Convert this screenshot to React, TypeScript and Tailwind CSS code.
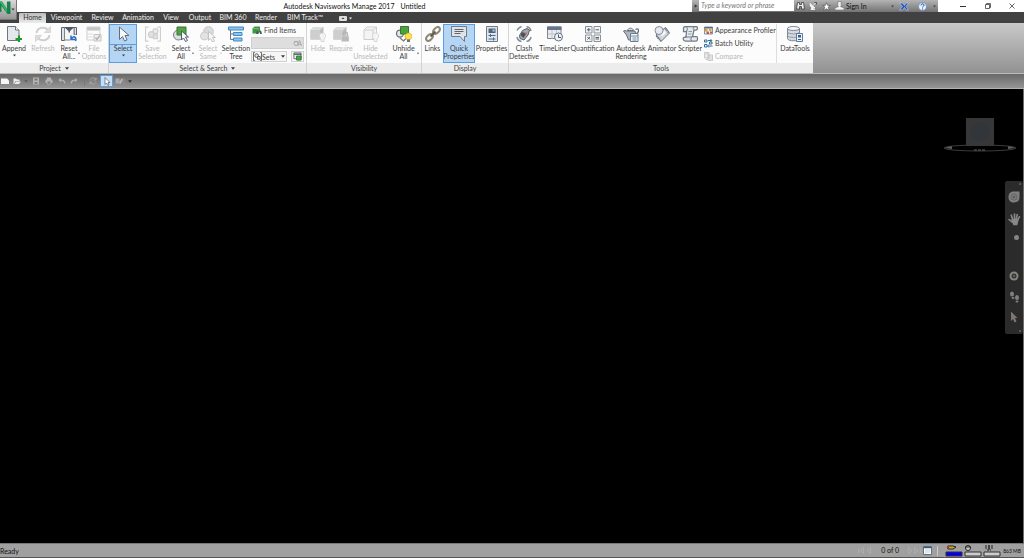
import type { ReactNode } from "react";

// 32x32 grid drawings used by the large ribbon buttons
const ribbonIcons: Record<string, ReactNode> = {
  append: (
    <>
      <path d="M3 1h16l7 7v21H3z" fill="#e4e7eb" stroke="#70757d" strokeWidth="2" />
      <path d="M19 1v7h7" fill="#fff" stroke="#70757d" strokeWidth="2" />
      <path d="M26 19v13M19 26h13" stroke="#1f9a2c" strokeWidth="4" />
    </>
  ),
  refresh: (
    <g fill="none" stroke="#cfcfcf" strokeWidth="4">
      <path d="M3 14C5 2 20 0 27 9M29 18C27 30 12 32 5 23" />
      <path d="M31 1v12H19zM1 31V19h12z" fill="#dedede" strokeWidth="1.5" />
    </g>
  ),
  reset: (
    <>
      <path d="M1 3h6v26H1zM26 3h5v15h-5z" fill="#dfe3e8" stroke="#5c6470" strokeWidth="2" />
      <path d="M7 3h19v25H7z" fill="#f4f5f7" stroke="#7b828c" strokeWidth="2" />
      <path d="M6 2h21l-9 8v3h-3v-3z" fill="#4f5865" />
      <path d="M18 18h14v14H18z" fill="#fafafa" />
      <path d="M20 19v8h8M21 26c3-7 11-5 8 4" fill="none" stroke="#2a6cc4" strokeWidth="3" />
    </>
  ),
  file: (
    <>
      <path d="M2 2h26v6H2z" fill="#c6c6c6" />
      <path d="M2 2h26v26H2z" fill="none" stroke="#cfcfcf" strokeWidth="2" />
      <path d="M2 9h26M2 16h12M2 22h11" stroke="#ddd" strokeWidth="2" />
      <path d="M16 17h14v13H16z" fill="#eee" stroke="#c4c4c4" strokeWidth="2" />
      <path d="M19 23l3 4 6-8" fill="none" stroke="#b5b5b5" strokeWidth="3" />
    </>
  ),
  select: <path d="M9 2v25l6-6 4 9 5-2-4-9h8z" fill="#f3f6fa" stroke="#646d7b" strokeWidth="2" />,
  save: (
    <g fill="none" stroke="#cfcfcf" strokeWidth="2.5">
      <path d="M7 2H1v28h6M25 2h6v28h-6" />
      <circle cx="13" cy="17" r="6" fill="#e2e2e2" />
      <circle cx="21" cy="10" r="5" fill="#ececec" />
      <path d="M17 16h8v9h-8z" fill="#e0e0e0" />
    </g>
  ),
  selectAll: (
    <>
      <circle cx="11" cy="18" r="10" fill="#dcdfe3" stroke="#747c86" strokeWidth="2" />
      <path d="M8 2h18v16H8z" fill="#54a344" stroke="#39782f" strokeWidth="2" />
      <path d="M17 10v18l4-4 4 7 4-2-4-7h6z" fill="#f8fafc" stroke="#555e6b" strokeWidth="2" />
    </>
  ),
  selectSame: (
    <>
      <circle cx="17" cy="11" r="10" fill="#dadada" stroke="#ccc" strokeWidth="2" />
      <circle cx="9" cy="20" r="8" fill="#e2e2e2" stroke="#ccc" strokeWidth="2" />
      <path d="M17 11v18l4-4 4 7 4-2-4-7h6z" fill="#f7f7f7" stroke="#c3c3c3" strokeWidth="2" />
    </>
  ),
  tree: (
    <>
      <path d="M5 7v20h7M5 16h7" fill="none" stroke="#6b7580" strokeWidth="2" />
      <g fill="#8fc3ea" stroke="#3f8cc6" strokeWidth="2">
        <path d="M1 2h30v6H1zM11 13h17v6H11zM11 24h17v6H11z" />
      </g>
    </>
  ),
  hide: (
    <>
      <path d="M1 8l6-6h20v18l-6 7H1z" fill="#bdbdbd" />
      <path d="M1 8h19v19H1z" fill="#cecece" />
      <path d="M1 8l6-6h20l-7 6z" fill="#dedede" />
      <path d="M22 26c-6-5-3-12 3-12s9 7 3 12v5h-6z" fill="#f3f3f3" stroke="#cecece" strokeWidth="1.5" />
    </>
  ),
  require: (
    <>
      <path d="M1 8l6-6h20v18l-6 7H1z" fill="#bdbdbd" />
      <path d="M1 8h19v19H1z" fill="#cecece" />
      <path d="M1 8l6-6h20l-7 6z" fill="#dedede" />
      <path d="M20 20v-4c0-5 9-5 9 0v4" fill="none" stroke="#b3b3b3" strokeWidth="2.5" />
      <path d="M17 20h15v11H17z" fill="#bababa" stroke="#ddd" />
    </>
  ),
  unselected: (
    <>
      <path d="M2 8l6-6h19v18l-6 7H2zM2 8h18v19M20 8l7-6" fill="#f4f4f4" stroke="#cdcdcd" strokeWidth="2" />
      <path d="M22 26c-6-5-3-12 3-12s9 7 3 12v5h-6z" fill="#f5f5f5" stroke="#cecece" strokeWidth="1.5" />
    </>
  ),
  unhide: (
    <>
      <circle cx="8" cy="15" r="7" fill="#e4e7eb" stroke="#68717d" strokeWidth="2.5" />
      <path d="M9 1h16v15H9z" fill="#4fa043" stroke="#39782f" strokeWidth="2" />
      <path d="M8 24l7 6 5-5" fill="none" stroke="#777" strokeWidth="2.5" />
      <path d="M22 27c-7-5-3-13 3-13s10 8 3 13z" fill="#ffe14a" stroke="#d7a715" strokeWidth="1.5" />
      <path d="M22 27h6v5h-6z" fill="#68717d" />
    </>
  ),
  links: (
    <g fill="none" strokeWidth="4">
      <ellipse cx="23" cy="9" rx="8" ry="5" transform="rotate(-45 23 9)" stroke="#8f8775" />
      <ellipse cx="9" cy="23" rx="8" ry="5" transform="rotate(-45 9 23)" stroke="#8f8775" />
      <path d="M11 21l10-10" stroke="#635c4d" />
    </g>
  ),
  quick: (
    <>
      <path d="M1 1h30v20h-4v10l-9-10H1z" fill="#dfe2e6" stroke="#717a87" strokeWidth="2" />
      <path d="M7 7h18M7 11h18M7 15h12" stroke="#5b6572" strokeWidth="2" />
    </>
  ),
  properties: (
    <>
      <path d="M5 1h22v30H5z" fill="#e1e5ea" stroke="#717a87" strokeWidth="2" />
      <path d="M9 5h14v9H9z" fill="#4c647d" />
      <path d="M17 7h4v4h-4z" fill="#c0cddb" />
      <path d="M9 19h14M9 26h14M13 16v6M19 23v6" stroke="#416d98" strokeWidth="2" />
    </>
  ),
  clash: (
    <>
      <path d="M2 9C4 4 6 3 11 1M21 1c5 1 8 4 9 9M2 22c1 5 4 8 9 9M21 31c5-1 8-4 9-9" fill="none" stroke="#858b94" strokeWidth="3" />
      <path d="M7 19l6-10 9-4 5 3-3 10-8 10-8-3z" fill="#a3aab2" stroke="#545c66" strokeWidth="2" />
      <path d="M12 12l9 3-6 9-6-5z" fill="#4c525b" />
      <path d="M17 14l5-2-2 6z" fill="#c36b5b" />
    </>
  ),
  timeliner: (
    <>
      <path d="M1 2h27v23H1z" fill="#e9ebee" stroke="#7d8591" strokeWidth="2" />
      <path d="M0 1h29v7H0z" fill="#66758a" />
      <path d="M2 16h26M10 8v17M19 8v17" stroke="#bfc5cc" strokeWidth="2" />
      <circle cx="23" cy="22" r="8" fill="#eef2f6" stroke="#69737f" strokeWidth="2" />
      <path d="M23 17v6h5" fill="none" stroke="#4b5663" strokeWidth="2" />
    </>
  ),
  quantification: (
    <>
      <g fill="#f1f2f4" stroke="#8b9199" strokeWidth="2">
        <path d="M1 1h13v13H1zM18 1h13v13H18zM1 18h13v13H1zM18 18h13v13H18z" />
      </g>
      <path d="M4 7.5h7M7.5 4v7M21 7.5h7M5 22l5 5M10 22l-5 5M21 23h7M21 26h7" stroke="#59616b" strokeWidth="2" />
    </>
  ),
  rendering: (
    <>
      <path d="M7 10h17l2 8-6 10h-9L7 18 1 10l3-1z" fill="#b3b8bf" stroke="#666e79" strokeWidth="2" />
      <path d="M9 9c1-6 11-6 12 0z" fill="#e1e4e7" stroke="#666e79" strokeWidth="2" />
      <path d="M25 7c8-4 8 5 1 9" fill="none" stroke="#666e79" strokeWidth="2.5" />
      <path d="M15 15h15v16H15z" fill="#f3f5f7" stroke="#6e7a88" strokeWidth="2" />
      <path d="M15 20h15M19 24h8M19 28h8" stroke="#6e91b5" strokeWidth="2" />
    </>
  ),
  animator: (
    <>
      <path d="M4 18L23 3l8 11-17 17z" fill="#d1d6dc" stroke="#69727f" strokeWidth="2" />
      <path d="M5 20l9 10M23 5l7 9" stroke="#69727f" strokeWidth="4" strokeDasharray="2 2" />
      <path d="M13 16l8-7 3 5-8 7z" fill="#f8fafc" />
      <circle cx="10" cy="9" r="8" fill="#e6e9ed" stroke="#858d98" strokeWidth="2" />
    </>
  ),
  scripter: (
    <>
      <path d="M9 11H3V4c0-3 3-3 5-3h20c4 0 4 7 0 7h-4l-3 13h8c3 0 3 9-1 9H6c-5-1-5-8 0-8h2z" fill="#e6e9ed" stroke="#737b86" strokeWidth="2.5" />
      <path d="M8 1c4 2 3 6 1 10M24 8c-3-2-2-6 3-7M6 22h14c-3 2-3 6 0 8" fill="none" stroke="#737b86" strokeWidth="2" />
      <path d="M13 11h7M12 16h7" stroke="#929aa4" strokeWidth="2" />
    </>
  ),
  data: (
    <>
      <path d="M1 5v20c0 6 24 6 24 0V5" fill="#d5dae0" stroke="#7b8590" strokeWidth="2" />
      <ellipse cx="13" cy="5" rx="12" ry="4" fill="#f3f5f7" stroke="#7b8590" strokeWidth="2" />
      <path d="M1 12c0 5 24 5 24 0M1 19c0 5 24 5 24 0" fill="none" stroke="#8e98a3" strokeWidth="2" />
      <path d="M19 15h12v16H19z" fill="#edf2f7" stroke="#597b9e" strokeWidth="2" />
      <path d="M22 18h6v5h-6zM22 26h6v2h-6z" fill="#355f8a" />
    </>
  ),
};

interface RibbonButtonProps {
  icon: string;
  lines: string[];
  width: string;
  disabled?: boolean;
  active?: boolean;
  menu?: "below" | "side";
}

function Caret({ className = "w-[4px]" }: { className?: string }) {
  return (
    <svg viewBox="0 0 6 4" className={`h-[3px] shrink-0 fill-current ${className}`}>
      <path d="M0 0h6L3 4z" />
    </svg>
  );
}

function RibbonButton({ icon, lines, width, disabled, active, menu }: RibbonButtonProps) {
  return (
    <button
      type="button"
      disabled={disabled}
      className={`relative flex h-[39px] shrink-0 flex-col items-center whitespace-nowrap pt-[2px] leading-[8px] ${width} ${
        active ? "bg-[#b5d5f4] outline outline-1 -outline-offset-1 outline-[#5a9de0]" : ""
      } ${disabled ? "text-[#b8b8b8]" : "text-[#3c3c3c]"}`}
    >
      <svg viewBox="0 0 32 32" className="mb-[2px] size-[16px] shrink-0">
        {ribbonIcons[icon]}
      </svg>
      {lines.map((line) => (
        <span key={line}>{line}</span>
      ))}
      {menu === "below" && <Caret className="mt-[2px] w-[3px]" />}
      {menu === "side" && <Caret className="absolute right-0 bottom-[8px] w-[2px]" />}
      {active && menu && <span className="absolute inset-x-0 top-[20px] h-px bg-[#5a9de0]" />}
    </button>
  );
}

function Panel({ title, menu, last, children }: { title: string; menu?: boolean; last?: boolean; children: ReactNode }) {
  return (
    <section className={`flex shrink-0 flex-col bg-[#fcfcfc] ${last ? "" : "border-r border-[#d4d4d4]"}`}>
      <div className="flex h-[40px] pt-px">{children}</div>
      <h2 className="flex h-[10px] items-center justify-center gap-[4px] bg-[#ececec] leading-[10px] text-[#3c3c3c]">
        {title}
        {menu && <Caret />}
      </h2>
    </section>
  );
}

const tabs = [
  { name: "Home", width: "w-[27px]" },
  { name: "Viewpoint", width: "w-[41px]" },
  { name: "Review", width: "w-[31px]" },
  { name: "Animation", width: "w-[40px]" },
  { name: "View", width: "w-[26px]" },
  { name: "Output", width: "w-[32px]" },
  { name: "BIM 360", width: "w-[34px]" },
  { name: "Render", width: "w-[32px]" },
  { name: "BIM Track™", width: "w-[46px]" },
];

function TitleBar() {
  return (
    <header className="flex h-[12px] shrink-0 bg-white text-[#333]">
      <button
        type="button"
        aria-label="Application menu"
        className="relative z-10 flex h-[20px] w-[17px] items-start rounded-br-[2px] border-r border-b border-[#777] bg-linear-to-b from-[#d9d9d9] to-[#969696]"
      >
        <svg viewBox="0 0 32 36" className="h-[18px] w-[16px] shrink-0">
          <path d="M0 3h4l10 15V3h7v25h-6L3 12v12H0z" fill="#178248" />
          <path d="M4 3l10 15v7L0 5V3z" fill="#35b36d" />
          <path d="M23 17h6l-3 4z" fill="#333" />
        </svg>
      </button>
      <h1 className="flex h-[11px] flex-1 items-center justify-center gap-[6px] text-[#111]">
        <span>Autodesk Navisworks Manage 2017</span>
        <span>Untitled</span>
      </h1>
      <div className="flex w-[246px] items-center bg-linear-to-b from-[#b4b4b4] to-[#747474]">
        <svg viewBox="0 0 8 12" className="h-[12px] w-[7px] shrink-0">
          <path d="M3 4l3 2-3 2z" fill="#333" />
        </svg>
        <input
          aria-label="Search"
          placeholder="Type a keyword or phrase"
          className="mb-px h-[11px] w-[95px] bg-white px-[2px] pb-px italic placeholder:text-[#777]"
        />
        <div className="flex flex-1 items-center pl-[2px]">
          <button type="button" aria-label="Find" className="w-[13px]">
            <svg viewBox="0 0 18 16" className="h-[8px] w-[9px]">
              <path d="M3 1h4v4h4V1h4l2 13h-6V9H7v5H1z" fill="#eee" stroke="#333" strokeWidth="1.5" />
            </svg>
          </button>
          <button type="button" aria-label="Subscription" className="w-[13px]">
            <svg viewBox="0 0 16 16" className="size-[8px]">
              <path d="M2 3c0 8 5 10 10 9zM6 11l-2 4h8M8 7l5-5" fill="#fff" stroke="#eee" strokeWidth="2" />
              <path d="M11 1h4v4" fill="none" stroke="#333" strokeWidth="1.5" />
            </svg>
          </button>
          <button type="button" aria-label="Favorites" className="w-[13px]">
            <svg viewBox="0 0 16 16" className="size-[9px]">
              <path d="M8 1l2 5h5l-4 3 2 6-5-3-5 3 2-6-4-3h5z" fill="#fff" stroke="#444" />
            </svg>
          </button>
          <button type="button" className="flex items-center gap-[2px] whitespace-nowrap pb-px text-[#111]">
            <svg viewBox="0 0 16 16" className="size-[9px]">
              <path d="M5 1h6v7l-1 2 6 2v4H0v-4l6-2-1-2z" fill="#f3f3f3" stroke="#666" />
            </svg>
            Sign In
          </button>
          <Caret className="ml-auto w-[3px] text-[#444]" />
          <button type="button" aria-label="Exchange" className="ml-[5px]">
            <svg viewBox="0 0 20 18" className="h-[9px] w-[10px]">
              <path d="M1 2l6 7-6 7h6l4-5 3 5h5l-5-7 5-7h-5l-3 5-4-5z" fill="#2859b5" stroke="#dce7fa" />
            </svg>
          </button>
          <button type="button" aria-label="Help" className="mr-[6px] ml-[9px]">
            <svg viewBox="0 0 18 18" className="size-[9px]">
              <circle cx="9" cy="9" r="8" fill="#eaf1fb" stroke="#3469ae" />
              <path d="M6 7c0-5 7-4 6 0-1 2-3 2-3 4M9 13v2" fill="none" stroke="#174f9f" strokeWidth="2" />
            </svg>
          </button>
          <Caret className="mr-[2px] w-[3px] text-[#444]" />
        </div>
      </div>
      <div className="flex w-[86px] items-center justify-between pr-[9px] pb-px pl-[22px]">
        <button type="button" aria-label="Minimize">
          <svg viewBox="0 0 6 6" className="size-[6px]"><path d="M0 3.5h6" stroke="#333" /></svg>
        </button>
        <button type="button" aria-label="Restore">
          <svg viewBox="0 0 12 12" className="size-[6px]">
            <path d="M1 3h8v8H1zM3 3V1h8v8H9" fill="none" stroke="#333" strokeWidth="1.5" />
          </svg>
        </button>
        <button type="button" aria-label="Close">
          <svg viewBox="0 0 12 12" className="size-[6px]">
            <path d="M1 1l10 10M11 1L1 11" stroke="#333" strokeWidth="1.5" />
          </svg>
        </button>
      </div>
    </header>
  );
}

function TabBar() {
  return (
    <nav className="flex h-[11px] shrink-0 items-end bg-[#414141] pl-[19px] text-[#f0f0f0]">
      {tabs.map((tab, i) => (
        <button
          key={tab.name}
          type="button"
          className={`h-[10px] whitespace-nowrap pb-[2px] text-center leading-[8px] ${tab.width} ${
            i === 0 ? "rounded-t-[1px] bg-linear-to-b from-[#bcbcbc] to-[#ececec] text-[#333]" : ""
          }`}
        >
          {tab.name}
        </button>
      ))}
      <button type="button" aria-label="Ribbon display" className="ml-[11px] flex h-[10px] items-center gap-[2px]">
        <svg viewBox="0 0 16 10" className="h-[5px] w-[8px]">
          <rect width="16" height="10" rx="2" fill="#ddd" />
          <path d="M5 6h6L8 3z" fill="#333" />
        </svg>
        <Caret className="w-[3px]" />
      </button>
    </nav>
  );
}

function Ribbon() {
  return (
    <main className="flex h-[50px] shrink-0 bg-linear-to-b from-[#c9c9c9] to-[#929292]">
      <Panel title="Project" menu>
        <RibbonButton icon="append" lines={["Append"]} width="w-[28px]" menu="below" />
        <RibbonButton icon="refresh" lines={["Refresh"]} width="w-[30px]" disabled />
        <RibbonButton icon="reset" lines={["Reset", "All..."]} width="w-[22px]" menu="side" />
        <RibbonButton icon="file" lines={["File", "Options"]} width="w-[28px]" disabled />
      </Panel>
      <Panel title="Select & Search" menu>
        <RibbonButton icon="select" lines={["Select"]} width="w-[28px]" active menu="below" />
        <RibbonButton icon="save" lines={["Save", "Selection"]} width="w-[31px]" disabled />
        <RibbonButton icon="selectAll" lines={["Select", "All"]} width="w-[26px]" menu="side" />
        <RibbonButton icon="selectSame" lines={["Select", "Same"]} width="w-[28px]" disabled menu="side" />
        <RibbonButton icon="tree" lines={["Selection", "Tree"]} width="w-[28px]" />
        <div className="flex w-[56px] flex-col pr-[2px] pl-px text-[#3c3c3c]">
          <button type="button" className="flex h-[13px] items-center gap-[2px] whitespace-nowrap pb-px pl-px">
            <svg viewBox="0 0 20 18" className="h-[9px] w-[10px] shrink-0">
              <path d="M1 5l4-4h11v10l-4 4H1z" fill="#3f9840" />
              <path d="M1 5h11v10" fill="none" stroke="#83c37a" strokeWidth="1.5" />
              <path d="M8 16l2-7h3v3h2V9h3l2 7h-4v-3h-3v3z" fill="#485767" />
            </svg>
            Find Items
          </button>
          <div className="flex h-[12px] items-center border border-[#d0d0d0] bg-[#dedede] pr-px">
            <input aria-label="Quick find" disabled className="h-[9px] w-[41px]" />
            <svg viewBox="0 0 18 16" className="h-[8px] w-[9px]" fill="none" stroke="#aaa" strokeWidth="2">
              <path d="M2 5h8M13 3l-3 10 3-3 4 3z" />
              <circle cx="6" cy="9" r="4" />
            </svg>
          </div>
          <div className="flex h-[13px] items-end">
            <label className="relative flex h-[11px] w-[36px] items-center border border-[#d0d0d0] bg-[#f6f6f6] pl-px">
              <svg viewBox="0 0 20 20" className="size-[9px] shrink-0" fill="#e1e4e8" stroke="#555" strokeWidth="2">
                <path d="M4 1H1v18h3M16 1h3v18h-3" fill="none" />
                <circle cx="8" cy="8" r="4" />
                <path d="M10 10h6v6h-6z" />
              </svg>
              <select aria-label="Selection sets" className="w-[18px] appearance-none">
                <option>Sets</option>
              </select>
              <Caret className="mr-px ml-auto w-[4px]" />
            </label>
            <button type="button" aria-label="Manage sets" className="ml-auto flex h-[11px] w-[13px] items-center justify-center border border-[#d0d0d0]">
              <svg viewBox="0 0 20 20" className="size-[9px]">
                <path d="M2 2h16v13H2z" fill="#eee" stroke="#56606b" strokeWidth="2" />
                <path d="M2 5h16" stroke="#56606b" strokeWidth="3" />
                <path d="M8 9h10v9H8z" fill="#4ba545" stroke="#297829" strokeWidth="2" />
              </svg>
            </button>
          </div>
        </div>
      </Panel>
      <Panel title="Visibility">
        <RibbonButton icon="hide" lines={["Hide"]} width="w-[22px]" disabled />
        <RibbonButton icon="require" lines={["Require"]} width="w-[24px]" disabled />
        <RibbonButton icon="unselected" lines={["Hide", "Unselected"]} width="w-[35px]" disabled />
        <RibbonButton icon="unhide" lines={["Unhide", "All"]} width="w-[31px]" menu="side" />
        <span className="w-[2px]" />
      </Panel>
      <Panel title="Display">
        <RibbonButton icon="links" lines={["Links"]} width="w-[21px]" />
        <RibbonButton icon="quick" lines={["Quick", "Properties"]} width="w-[32px]" active />
        <RibbonButton icon="properties" lines={["Properties"]} width="w-[33px]" />
      </Panel>
      <Panel title="Tools" last>
        <RibbonButton icon="clash" lines={["Clash", "Detective"]} width="w-[30px]" />
        <RibbonButton icon="timeliner" lines={["TimeLiner"]} width="w-[31px]" />
        <RibbonButton icon="quantification" lines={["Quantification"]} width="w-[45px]" />
        <RibbonButton icon="rendering" lines={["Autodesk", "Rendering"]} width="w-[32px]" />
        <RibbonButton icon="animator" lines={["Animator"]} width="w-[30px]" />
        <RibbonButton icon="scripter" lines={["Scripter"]} width="w-[26px]" />
        <div className="flex w-[74px] flex-col border-r border-[#ddd] pl-px text-[#3c3c3c]">
          <button type="button" className="flex h-[13px] items-center gap-[2px] whitespace-nowrap pb-px">
            <svg viewBox="0 0 18 18" className="size-[9px] shrink-0">
              <path d="M1 2h16v14H1z" fill="#f4f4f4" stroke="#4e77a6" strokeWidth="1.5" />
              <path d="M1 2h16v3H1z" fill="#456e9d" />
              <path d="M2 5h5v6H2zM10 6h5v4h-5z" fill="#e89a2c" />
              <path d="M5 11h5v5H5zM12 11h4v4h-4z" fill="#cc5841" />
            </svg>
            Appearance Profiler
          </button>
          <button type="button" className="flex h-[13px] items-center gap-[2px] whitespace-nowrap pb-px">
            <svg viewBox="0 0 18 18" className="size-[9px] shrink-0" fill="none" stroke="#326c9f" strokeWidth="2">
              <path d="M1 2h5v4H1zM1 11h5v5H1zM11 6h5v4h-5zM8 3h7M8 14h9M13 1l3 2-3 3M10 11l-3 3 3 3" />
            </svg>
            Batch Utility
          </button>
          <button type="button" disabled className="flex h-[13px] items-center gap-[2px] whitespace-nowrap pb-px text-[#b8b8b8]">
            <svg viewBox="0 0 18 18" className="size-[9px] shrink-0" fill="#eee" stroke="#bbb" strokeWidth="1.5">
              <path d="M1 1h9v11H1zM8 6h9v11H8zM3 4h5M11 10h4M11 14h4M3 15h5" />
            </svg>
            Compare
          </button>
        </div>
        <RibbonButton icon="data" lines={["DataTools"]} width="w-[36px]" />
      </Panel>
    </main>
  );
}

const quickActions = [
  { name: "New", width: "w-[10px]", color: "#f7f7f7", path: "M0 3h12l4 4v7H0z" },
  { name: "Open", width: "w-[13px]", color: "#ececec", path: "M1 3h5l2 2h5v3H5l-3 6H1zM6 9h10l-4 5H3z" },
  { name: "Open menu", width: "w-[6px]", color: "#444", path: "M2 6h12l-6 6z" },
  { name: "Save", width: "w-[13px]", color: "#b4b4b4", path: "M2 1h12v14H2zM5 3v4h6V3zM5 10v4h6v-4z" },
  { name: "Print", width: "w-[13px]", color: "#b4b4b4", path: "M4 1h8v4h3v7h-3v3H4v-3H1V5h3zM5 9v5h6V9z" },
  { name: "Undo", width: "w-[13px]", color: "#b0b0b0", path: "M1 6l5-4v3c6 0 9 2 9 8h-3c0-4-2-5-6-5v3z" },
  { name: "Redo", width: "w-[12px]", color: "#b0b0b0", path: "M15 6l-5-4v3c-6 0-9 2-9 8h3c0-4 2-5 6-5v3z" },
];

function QuickAccess() {
  return (
    <div role="toolbar" className="flex h-[16px] shrink-0 items-center border-t border-b border-t-[#bbb] border-b-[#b4b4b4] bg-linear-to-b from-[#696969] to-[#959595]">
      {quickActions.map((action) => (
        <button key={action.name} type="button" aria-label={action.name} className={`flex justify-center ${action.width}`}>
          <svg viewBox="0 0 16 16" className={action.name === "Open menu" ? "size-[4px]" : "size-[8px]"}>
            <path d={action.path} fill={action.color} fillRule="evenodd" />
          </svg>
        </button>
      ))}
      <span className="ml-[4px] h-[9px] w-px bg-[#777]" />
      <button type="button" aria-label="Refresh" className="ml-[4px] w-[11px]">
        <svg viewBox="0 0 16 16" className="size-[8px]" fill="none" stroke="#a8a8a8" strokeWidth="2">
          <path d="M2 7c1-7 9-6 11-3M14 1v5H9M14 9c-1 7-9 6-11 3M2 15v-5h5" />
        </svg>
      </button>
      <button type="button" aria-label="Select" className="flex h-[12px] w-[13px] items-center justify-center border border-[#5a9de0] bg-[#c5dff7]">
        <svg viewBox="0 0 16 18" className="h-[9px] w-[8px]">
          <path d="M4 1v14l3-3 3 5 2-1-2-5h4z" fill="#fff" stroke="#59606b" strokeWidth="1.5" />
        </svg>
      </button>
      <button type="button" aria-label="Selection options" className="ml-[2px] w-[13px]">
        <svg viewBox="0 0 20 16" className="h-[8px] w-[10px]">
          <path d="M1 3h8v10H1z" fill="#aaa" />
          <path d="M8 12l5-9 3 2-5 9zM18 2v12" fill="#bbb" stroke="#a4a4a4" />
        </svg>
      </button>
      <button type="button" aria-label="Customize toolbar">
        <Caret className="w-[4px] text-[#333]" />
      </button>
    </div>
  );
}

function NavigationBar() {
  return (
    <aside className="absolute top-[92px] right-0 flex h-[153px] w-[18px] flex-col items-center rounded-[2px] bg-[#2b2b2b]">
      <span className="mt-[2px] mr-[2px] size-[2px] self-end rounded-full bg-[#666]" />
      <button type="button" aria-label="Steering wheel" className="mt-[6px]">
        <svg viewBox="0 0 24 24" className="size-[12px]">
          <path d="M1 12C1 5 5 1 12 1h11v11c0 7-4 11-11 11S1 19 1 12z" fill="#808080" />
          <circle cx="12" cy="12" r="7" fill="#666" />
          <circle cx="12" cy="12" r="4" fill="#5a5a5a" stroke="#858585" strokeWidth="2" />
        </svg>
      </button>
      <button type="button" aria-label="Pan" className="mt-[10px]">
        <svg viewBox="0 0 24 24" className="size-[13px]" fill="none" stroke="#888" strokeLinecap="round" strokeWidth="3">
          <path d="M9 13L6 4M12 12V2M15 12l2-9M17 14l4-7M8 17l-6-5" />
          <path d="M8 13h10l-2 8h-5z" fill="#888" />
        </svg>
      </button>
      <button type="button" aria-label="Zoom" className="mt-[9px] ml-[4px]">
        <svg viewBox="0 0 10 10" className="size-[5px]"><circle cx="5" cy="5" r="5" fill="#858585" /></svg>
      </button>
      <button type="button" aria-label="Orbit" className="mt-[31px]">
        <svg viewBox="0 0 20 20" className="size-[10px]">
          <circle cx="10" cy="10" r="9" fill="#858585" />
          <circle cx="10" cy="10" r="5" fill="#34372b" />
          <circle cx="10" cy="10" r="2" fill="#687347" />
        </svg>
      </button>
      <button type="button" aria-label="Walk" className="mt-[10px]">
        <svg viewBox="0 0 22 24" className="h-[12px] w-[11px]" fill="#808080">
          <ellipse cx="6" cy="6" rx="4" ry="5" />
          <ellipse cx="8" cy="14" rx="3" ry="2" />
          <ellipse cx="16" cy="13" rx="4" ry="5" />
          <ellipse cx="16" cy="21" rx="3" ry="2" />
        </svg>
      </button>
      <button type="button" aria-label="Pick" className="mt-[8px]">
        <svg viewBox="0 0 16 24" className="h-[12px] w-[8px]">
          <path d="M2 1v19l4-4 3 7 4-2-3-7h5z" fill="#7d766f" />
        </svg>
      </button>
      <span className="mt-auto mr-[2px] mb-[2px] size-[2px] self-end rounded-full bg-[#666]" />
    </aside>
  );
}

function Viewport() {
  return (
    <div className="relative min-h-0 flex-1 border-r border-[#6d6d6d] bg-black">
      <svg viewBox="0 0 76 36" className="absolute top-[28px] right-[5px] h-[36px] w-[76px]">
        <ellipse cx="38" cy="31" rx="36" ry="3" fill="none" stroke="#3c3c3c" />
        <path d="M2 31l8-2v3zM74 31l-8-2v3z" fill="#5c5c5c" />
        <path d="M24 1h28v28H24z" fill="#373737" />
        <path d="M29 6h18v18H29z" fill="#32353a" />
        <path d="M32 33h12" stroke="#666" strokeDasharray="3 1" />
      </svg>
      <NavigationBar />
    </div>
  );
}

function StatusBar() {
  return (
    <footer className="flex h-[15px] shrink-0 items-center justify-between border-t border-b border-t-[#777] border-b-[#555] bg-[#a0a0a0] text-[#111]">
      <span>Ready</span>
      <div className="flex items-center pr-[3px]">
        <svg viewBox="0 0 20 10" className="h-[7px] w-[18px]" fill="none" stroke="#b5b5b5">
          <path d="M1 1v8M8 1L3 5l5 4zM18 1l-5 4 5 4z" />
        </svg>
        <span className="mr-[6px] ml-[7px] pb-px">0 of 0</span>
        <svg viewBox="0 0 20 10" className="h-[7px] w-[18px]" fill="none" stroke="#b5b5b5">
          <path d="M2 1l5 4-5 4zM11 1l5 4-5 4zM19 1v8" />
        </svg>
        <button type="button" aria-label="Sheet browser">
          <svg viewBox="0 0 18 18" className="size-[9px]">
            <path d="M1 1h16v16H1z" fill="#fff" stroke="#5d7187" strokeWidth="2" />
            <path d="M1 3h16" stroke="#3e5875" strokeWidth="3" />
            <path d="M6 5v11M8 8h7M8 12h7" stroke="#c2ccd6" strokeWidth="2" />
          </svg>
        </button>
        <span className="mr-[7px] ml-[5px] h-[10px] w-px bg-[#ccc]" />
        <svg viewBox="0 0 58 13" className="h-[13px] w-[58px]">
          <path d="M3 2h5l3 1-3 2H3z" fill="#c9b22a" stroke="#222" />
          <path d="M2 2h2v3H2z" fill="#a33" />
          <circle cx="23" cy="4" r="2.5" fill="#ccc" stroke="#222" />
          <path d="M20 3h6" stroke="#222" />
          <path d="M40 2h8M40 4h8M42 6h4" stroke="#222" strokeDasharray="2 1" />
          <path d="M44 1v5" stroke="#222" />
          <path d="M1 8h16v4H1z" fill="#0000f5" stroke="#333" />
          <path d="M20 8h16v4H20zM39 8h16v4H39z" fill="#ccc" stroke="#333" />
        </svg>
        <span className="text-[5px]">863 MB</span>
      </div>
    </footer>
  );
}

export default function App() {
  return (
    <div className="flex h-screen flex-col overflow-hidden bg-black font-[Lato,'Open_Sans',sans-serif] text-[7px] leading-[8px]">
      <TitleBar />
      <TabBar />
      <Ribbon />
      <QuickAccess />
      <Viewport />
      <StatusBar />
    </div>
  );
}
